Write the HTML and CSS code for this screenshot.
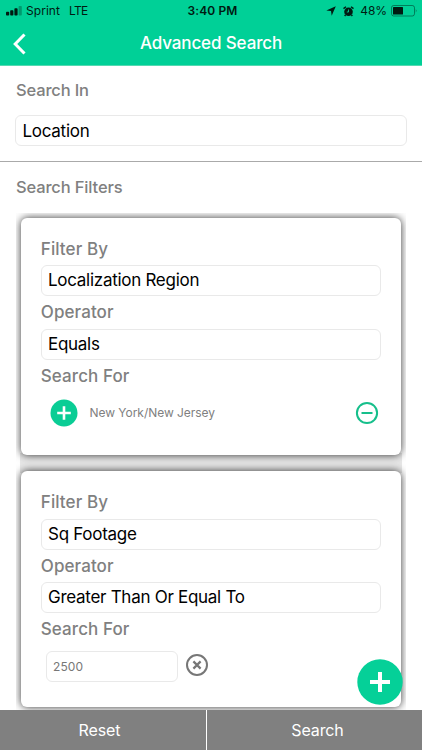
FILE: index.html
```html
<!DOCTYPE html>
<html lang="en">
<head>
<meta charset="utf-8">
<title>Advanced Search</title>
<link rel="stylesheet" href="styles.css">
</head>
<body>
<div class="app">
  <header class="header">
    <div class="status">
      <div class="status-left">
        <svg class="signal" width="16" height="10" viewBox="0 0 16 10"><rect x="0" y="5.7" width="3.2" height="3.8" rx=".8"/><rect x="4.2" y="4.2" width="3.2" height="5.3" rx=".8"/><rect x="8.4" y="2.3" width="3.2" height="7.2" rx=".8"/><rect x="12.6" y="0" width="3.2" height="9.5" rx=".8" opacity=".3"/></svg>
        <span class="carrier">Sprint</span><span class="network">LTE</span>
      </div>
      <span class="time">3:40 PM</span>
      <div class="status-right">
        <svg width="10" height="10" viewBox="0 0 10 10"><path d="M9.8.2 5.7 9.7 5 5 .3 4.4Z"/></svg>
        <svg class="alarm" width="11" height="11" viewBox="0 0 11 11"><circle cx="5.5" cy="5.8" r="4.300"/><path d="M.5 2.600 3 .7M10.500 2.600 8 .7M2.500 8.800 1.700 10M8.500 8.800l.8 1.200" stroke="#001b12" stroke-width="1.400"/><path d="M5.500 3.500V6H3.800" fill="none" stroke="#00d097" stroke-width=".9"/></svg>
        <span class="percent">48%</span>
        <svg class="battery" width="27" height="12" viewBox="0 0 27 12"><rect x=".5" y=".5" width="23" height="10.500" rx="2.200" fill="none" stroke="#001b12" stroke-opacity=".45"/><rect x="2" y="2" width="10" height="7.500" rx=".6"/><path d="M24.800 4q1.700 1.800 0 3.600Z" opacity=".5"/></svg>
      </div>
    </div>
    <div class="nav">
      <svg class="back" width="14" height="22" viewBox="0 0 14 22"><path d="M12.500 1.500 3.200 11l9.300 9.500" fill="none" stroke="#fff" stroke-width="3"/></svg>
      <h1 class="title">Advanced Search</h1>
    </div>
  </header>

  <section class="search-in">
    <h2 class="label label-section">Search In</h2>
    <div class="field">Location</div>
  </section>

  <section class="filters">
    <h2 class="label label-section">Search Filters</h2>
    <div class="cards">
      <article class="card">
        <h3 class="label">Filter By</h3>
        <div class="field">Localization Region</div>
        <h3 class="label">Operator</h3>
        <div class="field">Equals</div>
        <h3 class="label">Search For</h3>
        <div class="choice">
          <svg width="28" height="28" viewBox="0 0 28 28"><circle cx="14" cy="14" r="13.500" fill="#0acd95"/><path d="M7.200 14h13.600M14 7.200v13.600" stroke="#fff" stroke-width="2.600"/></svg>
          <span class="choice-text">New York/New Jersey</span>
          <svg class="remove" width="24" height="24" viewBox="0 0 24 24" fill="none" stroke="#16bf8b" stroke-width="2"><circle cx="12" cy="12" r="10.100"/><path d="M6.500 12h11"/></svg>
        </div>
      </article>
      <article class="card">
        <h3 class="label">Filter By</h3>
        <div class="field">Sq Footage</div>
        <h3 class="label">Operator</h3>
        <div class="field">Greater Than Or Equal To</div>
        <h3 class="label">Search For</h3>
        <div class="amount">
          <div class="field amount-field">2500</div>
          <svg class="clear" width="24" height="24" viewBox="0 0 24 24" fill="none" stroke="#777"><circle cx="12" cy="12" r="10" stroke-width="2"/><path d="m8.400 8.400 7.200 7.200m0-7.200-7.200 7.200" stroke-width="2.200"/></svg>
        </div>
      </article>
    </div>
  </section>

  <footer class="footer">
    <div class="action">Reset</div>
    <div class="action">Search</div>
  </footer>
  <svg class="fab" width="46" height="46" viewBox="0 0 46 46"><circle cx="23" cy="23" r="22.700" fill="#05d098"/><path d="M13 23h20M23 13v20" stroke="#fff" stroke-width="4"/></svg>
</div>
</body>
</html>
```
FILE: styles.css
```css
* { box-sizing: border-box; }
body { margin: 0; font-family: Inter, "Liberation Sans", sans-serif; background: #fff; }
svg { display: block; flex: none; }
.app { position: relative; width: 422px; height: 750px; overflow: hidden; display: flex; flex-direction: column; }

.header { height: 66px; flex: none; background: #00d097; border-bottom: 1px solid #54d9b1; }
.status { height: 22px; padding: 0 6px; display: grid; grid-template-columns: 1fr auto 1fr; align-items: center; font-size: 12px; line-height: 22px; color: #001b12; fill: #001b12; }
.status-left, .status-right { display: flex; align-items: center; }
.status-right { justify-content: flex-end; margin-right: -2px; }
.carrier { margin-left: 4px; letter-spacing: .05px; }
.network { margin-left: 9px; letter-spacing: -.7px; }
.time { font-weight: 600; letter-spacing: .1px; padding-left: 3px; }
.alarm { margin-left: 7px; }
.percent { margin-left: 6px; letter-spacing: -.1px; }
.battery { margin-left: 4px; }
.nav { height: 43px; padding: 0 12px; display: grid; grid-template-columns: 14px 1fr 14px; align-items: center; }
.title { margin: 0; text-align: center; font-size: 17px; line-height: 22px; padding-bottom: 1px; font-weight: 500; color: #fff; letter-spacing: -.12px; }

.label { margin: 0; font-size: 17px; line-height: 32.400px; font-weight: 550; color: #808080; letter-spacing: .08px; padding-left: .3px; white-space: nowrap; }
.label-section { font-size: 16.500px; line-height: 31.500px; letter-spacing: -.15px; padding-left: 1px; }
.field { height: 31px; padding: 0 6.500px; border: 1px solid #e9e9e9; border-radius: 6px; background: #fff; color: #000; font-size: 17px; line-height: 29px; letter-spacing: -.28px; white-space: nowrap; }

.search-in { height: 96px; flex: none; padding: 9px 15px 0; border-bottom: 1px solid #aaa; }
.search-in .label { margin-bottom: 8.500px; }
.search-in .field { line-height: 30px; }
.filters { padding: 10px 15px 0; height: 548px; flex: none; }
.cards { margin: 9.500px 0 0 1px; width: 390px; height: 497px; padding: 5px 4.500px; display: flex; flex-direction: column; gap: 16px; overflow: hidden; background: linear-gradient(#e8e8e8, #e8e8e8) 4px 240px / 382px 20px no-repeat; }
.card { height: 237px; flex: none; margin-right: .3px; padding: 15px 20.500px 15px 20px; background: #fff; border-radius: 6px; box-shadow: 0 0 9px rgba(0, 0, 0, .8); }
.card + .card { height: 235.500px; padding-top: 15.300px; }
.choice { margin-top: 7px; height: 28px; padding: 0 2px 0 9.500px; display: flex; align-items: center; }
.choice-text { margin-left: 11.500px; margin-top: -1px; font-size: 12px; color: #808080; letter-spacing: -.04px; }
.remove { margin-left: auto; }
.amount { display: flex; align-items: center; gap: 7px; margin: 5px 0 0 5px; }
.amount-field { width: 132px; font-size: 12px; color: #777; letter-spacing: .1px; }
.clear { margin-top: -3px; }

.footer { position: relative; height: 40px; flex: none; display: grid; grid-template-columns: 206px 215px; gap: 1px; background: #fff; }
.action { background: #808080; color: #fff; font-size: 16px; line-height: 40px; text-align: center; letter-spacing: -.12px; }
.action:first-child { padding-right: 7px; }
.action:last-child { padding-left: 6px; }
.fab { position: absolute; left: 357px; top: 659px; }
```
